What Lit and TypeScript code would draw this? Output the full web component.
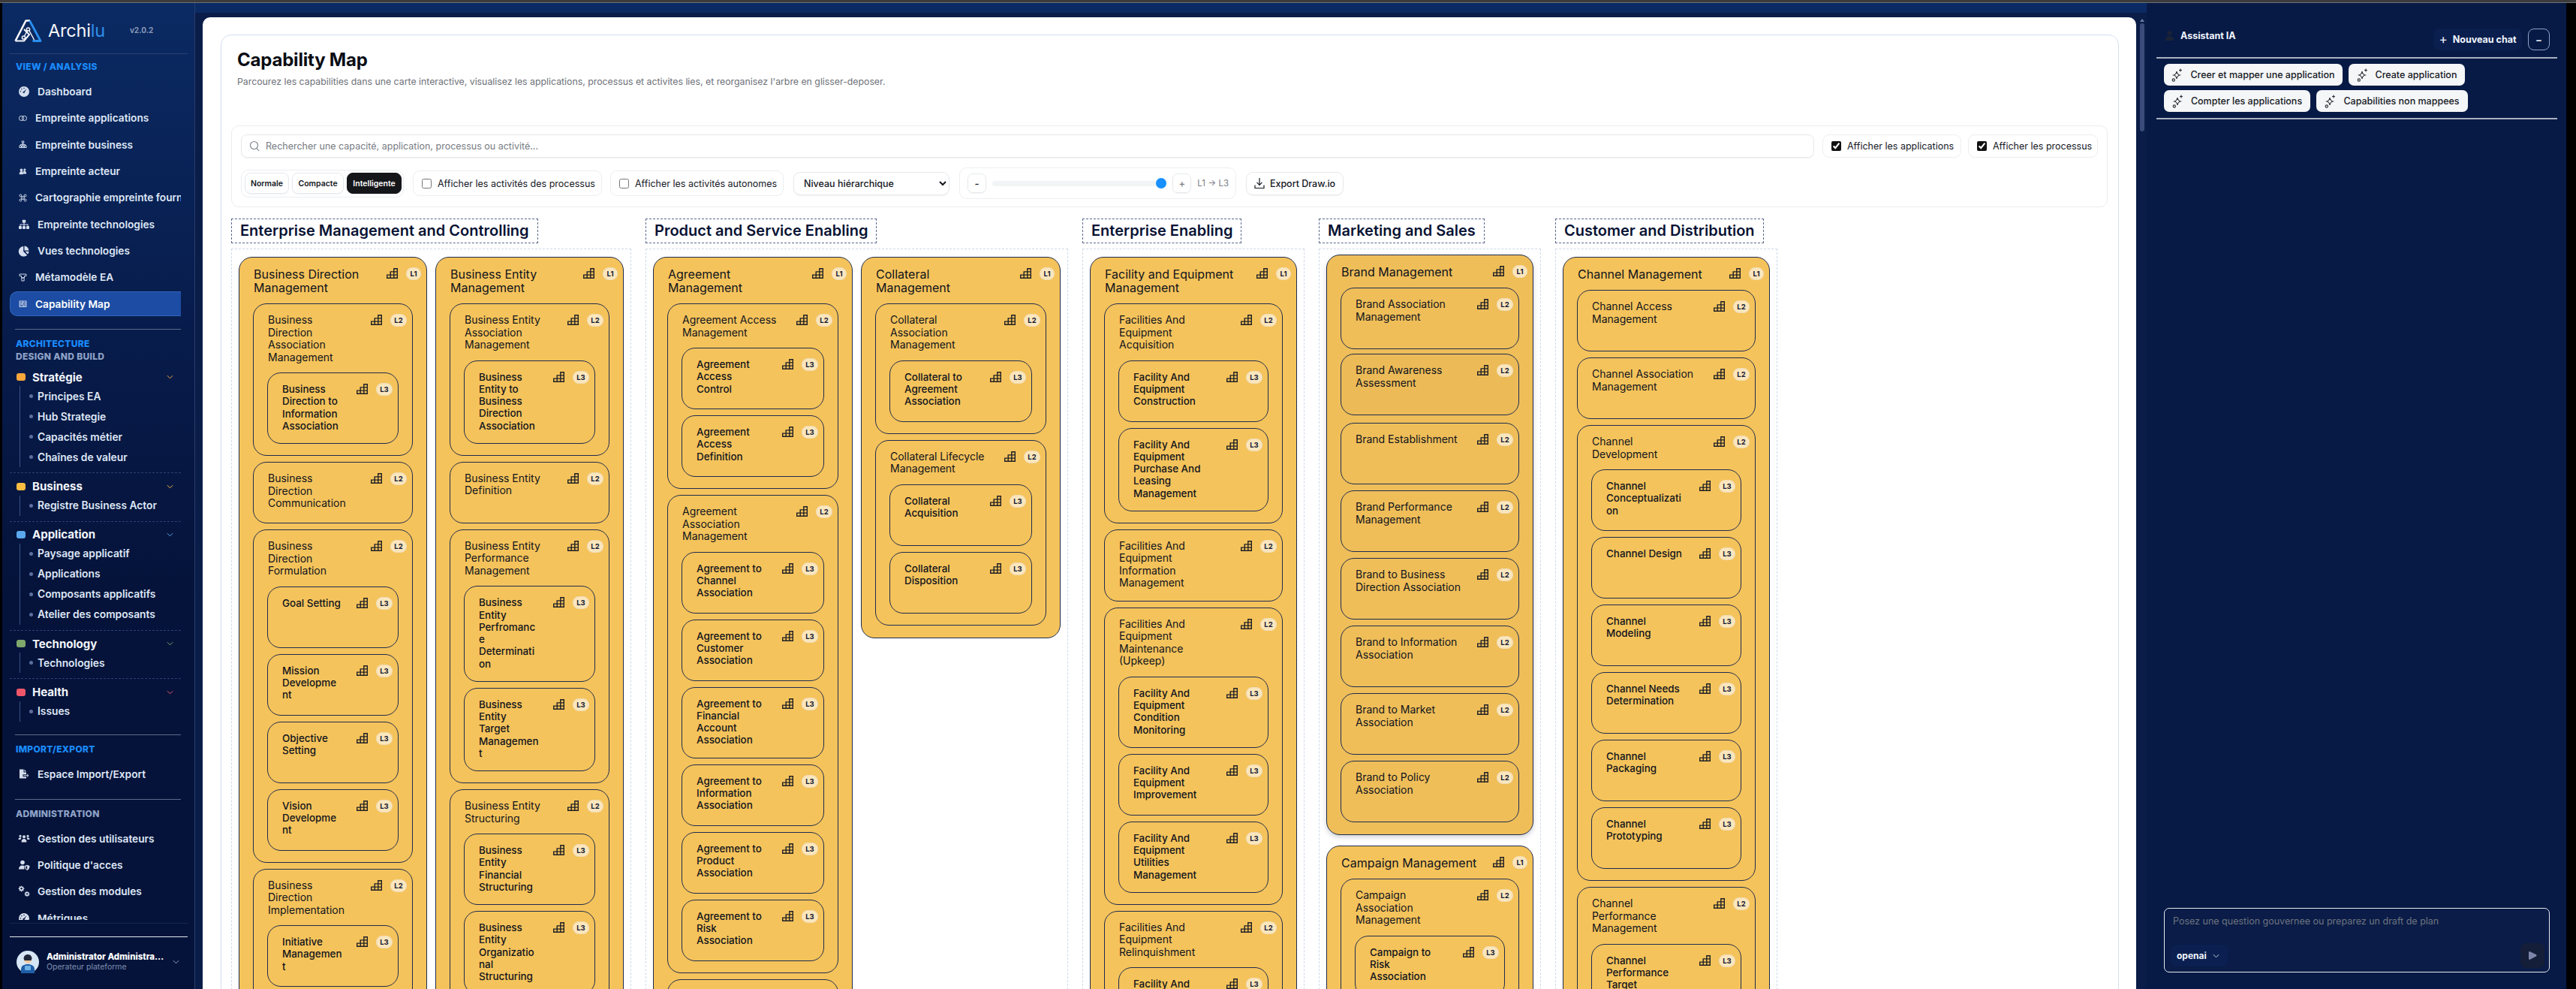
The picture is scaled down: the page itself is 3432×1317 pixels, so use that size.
import { LitElement, html, css, svg } from "lit";
import { customElement } from "lit/decorators.js";

// capability tree, line breaks are kept as the map shows them
type Cap = { t: string; c?: Cap[]; hot?: boolean };
type Domain = { name: string; size: string; cols: Cap[][] };

const leaf = (t: string, hot = false): Cap => ({ t, hot });

const domains: Domain[] = [
  {
    name: "Enterprise Management and Controlling",
    size: "narrow",
    cols: [
      [
        {
          t: "Business Direction\nManagement",
          c: [
            { t: "Business\nDirection\nAssociation\nManagement", c: [leaf("Business\nDirection to\nInformation\nAssociation")] },
            leaf("Business\nDirection\nCommunication"),
            {
              t: "Business\nDirection\nFormulation",
              c: [leaf("Goal Setting"), leaf("Mission\nDevelopme\nnt"), leaf("Objective\nSetting"), leaf("Vision\nDevelopme\nnt")],
            },
            { t: "Business\nDirection\nImplementation", c: [leaf("Initiative\nManagemen\nt"), leaf("Strategy\nDefinition")] },
          ],
        },
      ],
      [
        {
          t: "Business Entity\nManagement",
          c: [
            { t: "Business Entity\nAssociation\nManagement", c: [leaf("Business\nEntity to\nBusiness\nDirection\nAssociation")] },
            leaf("Business Entity\nDefinition"),
            {
              t: "Business Entity\nPerformance\nManagement",
              c: [leaf("Business\nEntity\nPerfromanc\ne\nDeterminati\non"), leaf("Business\nEntity\nTarget\nManagemen\nt")],
            },
            {
              t: "Business Entity\nStructuring",
              c: [leaf("Business\nEntity\nFinancial\nStructuring"), leaf("Business\nEntity\nOrganizatio\nnal\nStructuring")],
            },
          ],
        },
      ],
    ],
  },
  {
    name: "Product and Service Enabling",
    size: "medium",
    cols: [
      [
        {
          t: "Agreement\nManagement",
          c: [
            { t: "Agreement Access\nManagement", c: [leaf("Agreement\nAccess\nControl"), leaf("Agreement\nAccess\nDefinition")] },
            {
              t: "Agreement\nAssociation\nManagement",
              c: [
                leaf("Agreement to\nChannel\nAssociation"),
                leaf("Agreement to\nCustomer\nAssociation"),
                leaf("Agreement to\nFinancial\nAccount\nAssociation"),
                leaf("Agreement to\nInformation\nAssociation"),
                leaf("Agreement to\nProduct\nAssociation"),
                leaf("Agreement to\nRisk\nAssociation"),
              ],
            },
            leaf("Agreement\nDefinition"),
          ],
        },
      ],
      [
        {
          t: "Collateral\nManagement",
          c: [
            { t: "Collateral\nAssociation\nManagement", c: [leaf("Collateral to\nAgreement\nAssociation")] },
            { t: "Collateral Lifecycle\nManagement", c: [leaf("Collateral\nAcquisition"), leaf("Collateral\nDisposition")] },
          ],
        },
      ],
    ],
  },
  {
    name: "Enterprise Enabling",
    size: "wide",
    cols: [
      [
        {
          t: "Facility and Equipment\nManagement",
          c: [
            {
              t: "Facilities And\nEquipment\nAcquisition",
              c: [leaf("Facility And\nEquipment\nConstruction"), leaf("Facility And\nEquipment\nPurchase And\nLeasing\nManagement")],
            },
            leaf("Facilities And\nEquipment\nInformation\nManagement"),
            {
              t: "Facilities And\nEquipment\nMaintenance\n(Upkeep)",
              c: [
                leaf("Facility And\nEquipment\nCondition\nMonitoring"),
                leaf("Facility And\nEquipment\nImprovement"),
                leaf("Facility And\nEquipment\nUtilities\nManagement"),
              ],
            },
            { t: "Facilities And\nEquipment\nRelinquishment", c: [leaf("Facility And\nEquipment\nDisposal")] },
          ],
        },
      ],
    ],
  },
  {
    name: "Marketing and Sales",
    size: "wide",
    cols: [
      [
        {
          t: "Brand Management",
          hot: true,
          c: [
            leaf("Brand Association\nManagement"),
            leaf("Brand Awareness\nAssessment", true),
            leaf("Brand Establishment"),
            leaf("Brand Performance\nManagement"),
            leaf("Brand to Business\nDirection Association"),
            leaf("Brand to Information\nAssociation"),
            leaf("Brand to Market\nAssociation"),
            leaf("Brand to Policy\nAssociation"),
          ],
        },
        {
          t: "Campaign Management",
          c: [{ t: "Campaign\nAssociation\nManagement", c: [leaf("Campaign to\nRisk\nAssociation")] }],
        },
      ],
    ],
  },
  {
    name: "Customer and Distribution",
    size: "wide",
    cols: [
      [
        {
          t: "Channel Management",
          c: [
            leaf("Channel Access\nManagement"),
            leaf("Channel Association\nManagement"),
            {
              t: "Channel\nDevelopment",
              c: [
                leaf("Channel\nConceptualizati\non"),
                leaf("Channel Design"),
                leaf("Channel\nModeling"),
                leaf("Channel Needs\nDetermination"),
                leaf("Channel\nPackaging"),
                leaf("Channel\nPrototyping"),
              ],
            },
            { t: "Channel\nPerformance\nManagement", c: [leaf("Channel\nPerformance\nTarget\nManagement")] },
          ],
        },
      ],
    ],
  },
];

// sidebar icons, the outline ones are drawn smaller in the nav
const ic = (body: unknown, stroke = false) =>
  html`<svg class="nav-ico ${stroke ? "small" : ""}" viewBox="0 0 16 16" fill=${stroke ? "none" : "currentColor"} stroke=${stroke ? "currentColor" : "none"} stroke-width="1.200">${body}</svg>`;

const icons: Record<string, unknown> = {
  gauge: ic(svg`<path fill-rule="evenodd" d="M8 1a7 7 0 1 0 0 14A7 7 0 0 0 8 1Zm3.600 3.100-2.700 4.600a1.200 1.200 0 1 1-1-1l3.700-3.600ZM3.400 8.600a.8.8 0 1 1 0-1.600.8.8 0 0 1 0 1.600Zm1.500-3a.8.8 0 1 1 0-1.600.8.8 0 0 1 0 1.600ZM8 4.300a.8.8 0 1 1 0-1.600.8.8 0 0 1 0 1.600Z"/>`),
  rings: ic(svg`<circle cx="5.600" cy="8" r="3.800"/><circle cx="10.400" cy="8" r="3.800"/>`, true),
  tree: ic(svg`<rect x="6.500" y="2.500" width="3" height="3"/><rect x="2.500" y="10" width="3" height="3"/><rect x="6.500" y="10" width="3" height="3"/><rect x="10.500" y="10" width="3" height="3"/><path d="M8 5.500V10M4 10V8h8v2"/>`, true),
  actor: ic(svg`<circle cx="5.500" cy="5.500" r="1.800" fill="currentColor"/><circle cx="11" cy="5" r="1.400" fill="currentColor"/><path fill="currentColor" d="M2.500 12c.2-2.700 1.400-4 3-4s2.800 1.300 3 4h-6Zm7-.8c0-1.400-.3-2.400-.9-3.200.7-.6 1.500-.9 2.400-.7 1.200.3 2 1.600 2.100 3.900H9.500Z"/>`, true),
  cmd: ic(svg`<path d="M6 6H4a1.800 1.800 0 1 1 2-2v8a1.800 1.800 0 1 1-2-2h8a1.800 1.800 0 1 1-2 2V4a1.800 1.800 0 1 1 2 2H6Z"/>`, true),
  sitemap: ic(svg`<rect x="5.700" y="1.800" width="4.600" height="4" rx="1"/><rect x="1" y="10" width="4" height="4" rx="1"/><rect x="6" y="10" width="4" height="4" rx="1"/><rect x="11" y="10" width="4" height="4" rx="1"/><path d="M7.500 5.500h1V7.500H13.500V10h-1V8.500h-4V10h-1V8.500h-4V10h-1V7.500h5Z"/>`),
  pie: ic(svg`<path d="M7.200 2v6.900l5 4.900A6.800 6.800 0 1 1 7.200 2Z"/><path d="M8.500 1.500a6.500 6.500 0 0 1 6 6h-6Z"/><path d="M9.400 8.800h5.100a6.500 6.500 0 0 1-1.500 3.800Z"/>`),
  meta: ic(svg`<path d="M2.500 2.500h11v3h-3v3h-5v-3h-3ZM6 8.500h4v5H6Z"/>`, true),
  table: ic(svg`<path fill="currentColor" stroke="none" fill-rule="evenodd" d="M2 3h12v10.500H2ZM3.200 4.200v2h4v-2Zm5.200 0v2h4.400v-2ZM3.200 7.300v2h2.800v-2Zm4 0v2h5.600v-2ZM3.200 10.400v2h5.800v-2Zm7 0v2h2.600v-2Z"/>`, true),
  file: ic(svg`<path d="M2 1.500h5.500v4H11v2.800H6.500v3H11v2.200H2Z"/><path d="M8.500 1.500 11 4.500H8.500Z"/><path d="M7.500 9.700h6.300M12 7.800l2 1.900-2 1.900" fill="none" stroke="currentColor" stroke-width="1"/>`),
  users: ic(svg`<circle cx="8" cy="5.200" r="2"/><circle cx="3" cy="4.200" r="1.500"/><circle cx="13" cy="4.200" r="1.500"/><path d="M4.500 12.500c0-2.800 1.400-4.500 3.500-4.500s3.500 1.700 3.500 4.500ZM.5 9c0-1.800 1-2.800 2.500-2.800.6 0 1.200.2 1.600.6A5 5 0 0 0 3.600 9Zm15 0c0-1.800-1-2.800-2.500-2.800-.6 0-1.200.2-1.600.6.500.6.900 1.300 1 2.200Z"/>`),
  shield: ic(svg`<circle cx="6" cy="4.500" r="2.800"/><path d="M1 13.500c0-3 2-5 5-5 1 0 1.700.2 2.400.6v4.400Z"/><path fill-rule="evenodd" d="M12.200 7.800 15.500 9c0 3-1 5-3.300 6-2.300-1-3.300-3-3.300-6Zm0 1.400-2 .7c.1 1.900.7 3.200 2 3.900Z"/>`),
  cogs: ic(svg`<path fill-rule="evenodd" d="M5 .8h1.300l.3 1.300.9.400 1.100-.7.9.9-.7 1.100.4.900 1.300.3v1.300l-1.300.3-.4.900.7 1.100-.9.900-1.100-.7-.9.400-.3 1.300H5l-.3-1.300-.9-.4-1.100.7-.9-.9.7-1.100-.4-.9L.8 6V4.700l1.300-.3.4-.9-.7-1.100.9-.9 1.100.7.9-.4Zm.7 3a1.600 1.600 0 1 0 0 3.200 1.600 1.600 0 0 0 0-3.200Z" transform="scale(.8)"/><path fill-rule="evenodd" d="M5 .8h1.300l.3 1.300.9.400 1.100-.7.9.9-.7 1.100.4.900 1.300.3v1.300l-1.300.3-.4.900.7 1.100-.9.900-1.100-.7-.9.400-.3 1.300H5l-.3-1.300-.9-.4-1.100.7-.9-.9.7-1.100-.4-.9L.8 6V4.700l1.300-.3.4-.9-.7-1.100.9-.9 1.100.7.9-.4Zm.7 3a1.600 1.600 0 1 0 0 3.200 1.600 1.600 0 0 0 0-3.200Z" transform="translate(8 7.500) scale(.72)"/>`),
};

const stairs = html`<svg class="stairs" viewBox="0 0 15 14" fill="none" stroke="currentColor" stroke-width="1.400"><path d="M.7 13.300h13.600V.7H9.800v4.200H5.200v4.200H.7ZM5.200 9.100h9.100M9.800 4.900h4.500M5.200 9.100v4.200M9.800 4.900v8.400"/></svg>`;

const chevron = html`<svg class="chev" viewBox="0 0 10 6" fill="none" stroke="currentColor" stroke-width="1.100"><path d="M1 1l4 4 4-4"/></svg>`;

const sparkle = html`<svg class="spark" viewBox="0 0 15 20" fill="none" stroke="currentColor" stroke-width="1.200"><path d="M7 5c.5 3.200 1.500 4.300 4 5-2.500.7-3.500 1.800-4 5-.5-3.200-1.500-4.300-4-5 2.500-.7 3.500-1.800 4-5Z"/><path d="M12 1.500v4M10 3.500h4"/><circle cx="2.800" cy="16.500" r="1.600"/></svg>`;

@customElement("app-root")
export class AppRoot extends LitElement {
  static styles = css`
    :host {
      display: block;
      height: 100vh;
      overflow: hidden;
      background: #000;
      font-family: Inter, "Liberation Sans", sans-serif;
    }
    .topbar {
      height: 4px;
      background: #3a3b3a;
      border-bottom: 1px solid #6d7078;
      box-sizing: border-box;
    }
    .shell {
      display: flex;
      height: calc(100% - 4px);
      padding: 0 13px 0 3px;
    }

    /* sidebar */
    .side {
      width: 257px;
      flex: none;
      box-sizing: border-box;
      padding: 0 9px 0 10px;
      display: flex;
      flex-direction: column;
      background: linear-gradient(180deg, #0b2a63 0%, #071a48 38%, #05133a 60%, #05133a 100%);
      border-right: 1px solid #2a3c6d;
      color: #dfe7f6;
    }
    .brand {
      flex: none;
      height: 68px;
      box-sizing: border-box;
      border-bottom: 1px solid #2b3f6e;
      display: flex;
      align-items: center;
      padding: 6px 0 0 6px;
    }
    .logo {
      width: 37px;
      height: 33px;
      flex: none;
    }
    .word {
      font-size: 23.500px;
      font-weight: 400;
      color: #f3f5f9;
      margin-left: 8px;
      letter-spacing: -0.2px;
    }
    .word b {
      font-weight: 400;
      color: #2f8fe8;
    }
    .ver {
      font-size: 10px;
      font-weight: 700;
      color: #8797b6;
      margin-left: 33px;
      margin-top: -2px;
    }
    .nav {
      flex: 1;
      min-height: 0;
      width: 228px;
      overflow: hidden;
      padding-top: 9px;
    }
    .sec {
      height: 16px;
      line-height: 16px;
      margin-left: 8px;
      font-size: 12px;
      font-weight: 800;
      letter-spacing: 0.3px;
      color: #1a8dff;
      white-space: nowrap;
    }
    .sec.sub {
      color: #8fa3c8;
      margin-top: 1px;
      margin-bottom: 2px;
    }
    .sec.muted {
      color: #8fa3c8;
    }
    .items {
      margin-top: 8.500px;
      display: flex;
      flex-direction: column;
      gap: 2.350px;
    }
    .item {
      height: 33px;
      box-sizing: border-box;
      display: flex;
      align-items: center;
      gap: 10px;
      padding-left: 11px;
      font-size: 13.700px;
      font-weight: 600;
      white-space: nowrap;
      border-radius: 10px 0 0 10px;
    }
    .item.on {
      background: #1c4ca3;
      border: 1px solid #3266bd;
      border-right: 0;
      padding-left: 10px;
      color: #fff;
    }
    .nav-ico {
      width: 16px;
      height: 16px;
      flex: none;
      color: #d5deee;
    }
    .nav-ico.small {
      width: 13px;
      height: 13px;
    }
    .rule {
      height: 1px;
      background: #5c6a8a;
      margin: 16.500px 0 11px 7px;
    }
    .rule.tight {
      margin-top: 10px;
    }
    .group {
      padding: 4.400px 0 7px;
      border-bottom: 1px dashed #2c3f70;
    }
    .group.end {
      border-bottom: 0;
    }
    .group-head {
      height: 26px;
      display: flex;
      align-items: center;
      padding-left: 9px;
      font-size: 15px;
      font-weight: 700;
      color: #f3f6fb;
    }
    .swatch {
      width: 12px;
      height: 10px;
      border-radius: 3px;
      margin-right: 9px;
      flex: none;
    }
    .chev {
      width: 9px;
      height: 6px;
      margin-left: auto;
      margin-right: 10px;
    }
    .subs {
      margin: -1px 0 0 13px;
      border-left: 1px solid #3d5285;
      padding-left: 12px;
    }
    .subitem {
      height: 27px;
      display: flex;
      align-items: center;
      font-size: 13.800px;
      font-weight: 600;
      white-space: nowrap;
      color: #dfe7f6;
    }
    .subitem i {
      width: 5px;
      height: 5px;
      border-radius: 50%;
      background: #5c6f9e;
      margin-right: 6px;
      flex: none;
    }
    .side-foot {
      flex: none;
      height: 88px;
      box-sizing: border-box;
      border-top: 1px solid #14264f;
      margin-top: 4px;
      padding-top: 17px;
    }
    .user {
      border-top: 1px solid #e7eaf0;
      display: flex;
      align-items: center;
      padding: 18px 9px 0;
      gap: 10px;
    }
    .avatar {
      width: 30px;
      height: 30px;
      flex: none;
    }
    .who {
      flex: 1;
      min-width: 0;
    }
    .who b {
      display: block;
      font-size: 11.500px;
      font-weight: 800;
      color: #fff;
      white-space: nowrap;
      overflow: hidden;
      text-overflow: ellipsis;
      line-height: 14px;
    }
    .who span {
      display: block;
      font-size: 10.500px;
      color: #7f8fb0;
      line-height: 14px;
    }
    .user .chev {
      margin: 0 2px 0 0;
      color: #9aa6bf;
    }

    /* middle */
    .center {
      flex: 1;
      min-width: 0;
      display: flex;
      padding-top: 19px;
      background: linear-gradient(180deg, #0b2a63 0, #0b2a63 13px, #0a1d48 13px);
    }
    .panel {
      flex: 1;
      min-width: 0;
      margin-left: 10px;
      background: #fff;
      border-radius: 10px 10px 0 0;
      padding: 23px 23px 0 24px;
      overflow: hidden;
    }
    .sbar {
      width: 14px;
      flex: none;
      display: flex;
      flex-direction: column;
      align-items: center;
      padding-left: 1px;
      padding-top: 2px;
      box-sizing: border-box;
    }
    .sbar i {
      width: 0;
      height: 0;
      border-left: 3px solid transparent;
      border-right: 3px solid transparent;
      border-bottom: 4px solid #6f80a6;
    }
    .sbar b {
      display: block;
      width: 6px;
      height: 144px;
      border-radius: 3px;
      background: #3a4d7a;
      margin-top: 2px;
    }
    .card {
      border: 1px solid #d3dfee;
      border-radius: 14px;
      padding: 18px 14px 0 13px;
    }
    .hero {
      padding-left: 8px;
      height: 102px;
    }
    h1 {
      margin: 0;
      font-size: 24px;
      line-height: 30px;
      font-weight: 700;
      color: #0a0d14;
      letter-spacing: -0.2px;
    }
    .hero p {
      margin: 6px 0 0;
      font-size: 12.300px;
      line-height: 16px;
      color: #6d7178;
    }
    .toolbar {
      border: 1px solid #ececef;
      border-radius: 10px;
      padding: 11px 12px 10px;
      display: flex;
      flex-direction: column;
      gap: 13px;
    }
    .row {
      display: flex;
      align-items: center;
      gap: 10px;
    }
    .row.tools {
      gap: 12px;
    }
    .search {
      flex: 1;
      height: 31px;
      box-sizing: border-box;
      border: 1px solid #e6e8ec;
      border-radius: 8px;
      box-shadow: 0 1px 1px rgba(0, 0, 0, 0.05);
      display: flex;
      align-items: center;
      gap: 8px;
      padding-left: 10px;
      font-size: 12.500px;
      color: #777b82;
    }
    .search svg {
      width: 14px;
      height: 15px;
      flex: none;
    }
    .check {
      height: 31px;
      box-sizing: border-box;
      border: 1px solid #eceef1;
      border-radius: 9px;
      display: flex;
      align-items: center;
      gap: 8px;
      padding-left: 11px;
      font-size: 12.500px;
      color: #15181f;
      white-space: nowrap;
    }
    .check input {
      width: 13px;
      height: 13px;
      margin: 0;
      accent-color: #111;
    }
    .check.on-app {
      width: 185px;
      margin-left: 1px;
    }
    .check.on-proc {
      width: 173px;
      margin-left: -1px;
    }
    .check.wide {
      height: 34px;
      width: 252px;
    }
    .check.wide2 {
      height: 34px;
      width: 231px;
      margin-left: -1px;
    }
    .seg {
      width: 217px;
      height: 37px;
      box-sizing: border-box;
      border: 1px solid #eceef1;
      border-radius: 10px;
      display: flex;
      align-items: center;
      gap: 4px;
      padding-left: 4px;
    }
    .seg span {
      height: 28px;
      box-sizing: border-box;
      border: 1px solid #e6e8ec;
      border-radius: 8px;
      display: flex;
      align-items: center;
      justify-content: center;
      font-size: 10.500px;
      font-weight: 600;
      color: #15181f;
      box-shadow: 0 1px 1px rgba(0, 0, 0, 0.05);
    }
    .seg .s1 {
      width: 59px;
    }
    .seg .s2 {
      width: 69px;
    }
    .seg .s3 {
      width: 73px;
      background: #15161a;
      color: #fff;
      border-color: #15161a;
    }
    .level {
      width: 208px;
      height: 31px;
      box-sizing: border-box;
      border: 1px solid #e6e8ec;
      border-radius: 9px;
      background: #fff;
      padding-left: 9px;
      font: 500 12.500px Inter, "Liberation Sans", sans-serif;
      color: #15181f;
      margin-left: 1px;
      box-shadow: 0 1px 1px rgba(0, 0, 0, 0.05);
    }
    .zoom {
      width: 369px;
      height: 42px;
      margin-left: 1px;
      box-sizing: border-box;
      border: 1px solid #eceef1;
      border-radius: 10px;
      display: flex;
      align-items: center;
      padding: 0 9px 0 10px;
      gap: 8px;
    }
    .step {
      width: 25px;
      height: 26px;
      flex: none;
      box-sizing: border-box;
      border: 1px solid #e6e8ec;
      border-radius: 7px;
      display: flex;
      align-items: center;
      justify-content: center;
      font-size: 13px;
      font-weight: 500;
      color: #15181f;
      box-shadow: 0 1px 1px rgba(0, 0, 0, 0.05);
    }
    .step.dim {
      color: #7a7e85;
    }
    .zoom input {
      flex: 1;
      min-width: 0;
      margin: 0;
      height: 16px;
      -webkit-appearance: none;
      appearance: none;
      background: transparent;
    }
    .zoom input::-webkit-slider-runnable-track {
      height: 7px;
      border-radius: 4px;
      background: #f2f4f5;
    }
    .zoom input::-webkit-slider-thumb {
      -webkit-appearance: none;
      width: 14px;
      height: 14px;
      margin-top: -3.500px;
      border-radius: 50%;
      background: #1890ff;
    }
    .range-label {
      font-size: 11.500px;
      color: #7a7e85;
      white-space: nowrap;
    }
    .export {
      width: 130px;
      height: 31px;
      margin-left: 1px;
      box-sizing: border-box;
      border: 1px solid #e6e8ec;
      border-radius: 9px;
      display: flex;
      align-items: center;
      justify-content: center;
      gap: 7px;
      font-size: 12.500px;
      font-weight: 500;
      color: #15181f;
      white-space: nowrap;
      box-shadow: 0 1px 1px rgba(0, 0, 0, 0.05);
    }
    .export svg {
      width: 14px;
      height: 16px;
    }

    /* capability map */
    .map {
      display: flex;
      gap: 19px;
      align-items: stretch;
      margin-top: 15px;
    }
    .domain {
      display: flex;
      flex-direction: column;
      flex: none;
    }
    .domain-name {
      align-self: flex-start;
      height: 33px;
      line-height: 31px;
      box-sizing: border-box;
      border: 1px dashed #5a6a8c;
      padding: 0 11px;
      font-size: 20px;
      font-weight: 600;
      color: #071233;
      white-space: nowrap;
    }
    .domain-body {
      flex: 1;
      display: flex;
      gap: 11px;
      margin-top: 7px;
      padding: 10px 9px 10px 9px;
      border: 1px dashed #cfd9e7;
      align-items: flex-start;
    }
    .col {
      display: flex;
      flex-direction: column;
      gap: 11px;
    }
    .domain.narrow .col {
      width: 251px;
    }
    .domain.medium .col {
      width: 266px;
    }
    .domain.wide .col {
      width: 276px;
    }
    .node {
      box-sizing: border-box;
      background: #f5c35b;
      border: 1px solid #1d2b4f;
      border-radius: 18px;
      padding: 13px 18px 15px;
      min-height: 82px;
      color: #10131c;
    }
    .node.l1 {
      padding-bottom: 16px;
    }
    .node.hot {
      background: #efbe59;
      transform: translateY(-2px);
    }
    .node.l1.hot {
      transform: translateY(-3px);
      box-shadow: 0 3px 6px rgba(20, 30, 60, 0.2);
    }
    .node.l1.hot > .kids > .node {
      background: #efbe59;
    }
    .node.l1.hot > .kids > .node.hot {
      background: #ecbb57;
    }
    .head {
      display: flex;
      align-items: flex-start;
      margin-right: -11px;
      padding-left: 1px;
    }
    .name {
      flex: 1;
      min-width: 0;
      white-space: pre-line;
    }
    .l1 > .head > .name {
      font-size: 16px;
      line-height: 18px;
    }
    .l2 > .head > .name {
      font-size: 14px;
      line-height: 16.500px;
    }
    .l3 > .head > .name {
      font-size: 13.400px;
      font-weight: 500;
      line-height: 16.250px;
    }
    .stairs {
      width: 15px;
      height: 14px;
      flex: none;
      margin-top: 1px;
      color: #1f2026;
    }
    .badge {
      flex: none;
      width: 22px;
      height: 17px;
      margin-left: 11px;
      border-radius: 8px;
      background: #fbe6bd;
      border: 1px solid #f0dcb5;
      box-sizing: border-box;
      font-size: 9.500px;
      font-weight: 700;
      line-height: 15px;
      text-align: center;
      color: #141a33;
    }
    .l1 > .head > .badge {
      width: 20px;
    }
    .kids {
      margin-top: 12px;
      display: flex;
      flex-direction: column;
      gap: 8px;
    }

    /* assistant */
    .assistant {
      width: 559px;
      flex: none;
      box-sizing: border-box;
      background: #071a45;
      padding: 0 12px 0 13px;
      display: flex;
      flex-direction: column;
    }
    .ass-head {
      flex: none;
      height: 74px;
      box-sizing: border-box;
      border-bottom: 2px solid #a9b0c0;
      display: flex;
      align-items: flex-start;
      padding-left: 11px;
    }
    .ass-title {
      margin-top: 36px;
      display: flex;
      align-items: center;
      gap: 8px;
      font-size: 12.500px;
      font-weight: 700;
      color: #f2f6ff;
    }
    .ass-title svg {
      width: 13px;
      height: 15px;
      color: #1a2336;
    }
    .new-chat {
      margin: 34px 0 0 auto;
      width: 118px;
      height: 29px;
      box-sizing: border-box;
      border-radius: 8px;
      background: #0b1f4e;
      display: flex;
      align-items: center;
      justify-content: center;
      gap: 7px;
      font-size: 12.500px;
      font-weight: 700;
      color: #f2f6ff;
      white-space: nowrap;
    }
    .new-chat span {
      font-size: 17px;
      font-weight: 400;
      line-height: 1;
    }
    .collapse {
      margin: 34px 10px 0 8px;
      width: 29px;
      height: 29px;
      box-sizing: border-box;
      border: 1px solid #8fa1c6;
      border-radius: 8px;
      display: flex;
      align-items: center;
      justify-content: center;
      color: #e6ecf8;
      font-size: 13px;
      font-weight: 700;
    }
    .chips {
      flex: none;
      height: 81px;
      box-sizing: border-box;
      border-bottom: 2px solid #a9b0c0;
      padding: 7px 0 0 10px;
      display: flex;
      flex-wrap: wrap;
      align-content: flex-start;
      gap: 6px 8px;
      width: 100%;
    }
    .chip {
      height: 29px;
      box-sizing: border-box;
      border-radius: 7px;
      background: #f4f6f7;
      display: flex;
      align-items: center;
      justify-content: center;
      gap: 10px;
      font-size: 12.500px;
      font-weight: 500;
      color: #15181f;
      white-space: nowrap;
    }
    .chip.c1 {
      width: 238px;
    }
    .chip.c2 {
      width: 155px;
    }
    .chip.c3 {
      width: 195px;
    }
    .chip.c4 {
      width: 202px;
    }
    .spark {
      width: 15px;
      height: 20px;
      color: #2d3037;
      flex: none;
    }
    .ass-fill {
      flex: 1;
    }
    .composer {
      flex: none;
      height: 86px;
      margin: 0 10px 22px;
      box-sizing: border-box;
      border: 1px solid #e5e8ef;
      border-radius: 7px;
      padding: 9px 6px 5px 11px;
      display: flex;
      flex-direction: column;
      justify-content: space-between;
      background: #0a1c47;
    }
    .composer p {
      margin: 0;
      font-size: 12.500px;
      line-height: 16px;
      color: #6e7480;
    }
    .composer-row {
      display: flex;
      align-items: flex-end;
      justify-content: space-between;
    }
    .model {
      width: 77px;
      height: 29px;
      margin-left: -3px;
      margin-bottom: 2px;
      box-sizing: border-box;
      border-radius: 8px;
      background: #0b2051;
      display: flex;
      align-items: center;
      gap: 8px;
      padding-left: 8px;
      font-size: 12px;
      font-weight: 700;
      color: #f2f6ff;
    }
    .model .chev {
      margin: 0;
      color: #c8d1e2;
    }
    .send {
      width: 32px;
      height: 33px;
      border-radius: 8px;
      background: #141e38;
      display: flex;
      align-items: center;
      justify-content: center;
    }
    .send svg {
      width: 12px;
      height: 13px;
    }
  `;

  renderNode(n: Cap, level: number): unknown {
    return html`<div class="node l${level} ${n.hot ? "hot" : ""}">
      <div class="head">
        <div class="name">${n.t}</div>
        ${stairs}
        <span class="badge">L${level}</span>
      </div>
      ${n.c ? html`<div class="kids">${n.c.map((k) => this.renderNode(k, level + 1))}</div>` : ""}
    </div>`;
  }

  renderGroup(name: string, color: string, subs: string[], end = false) {
    return html`<div class="group ${end ? "end" : ""}">
      <div class="group-head">
        <span class="swatch" style="background:${color}"></span>${name}<span style="color:${color};margin-left:auto;display:flex">${chevron}</span>
      </div>
      <div class="subs">${subs.map((s) => html`<div class="subitem"><i></i>${s}</div>`)}</div>
    </div>`;
  }

  renderSidebar() {
    const view: [string, string][] = [
      ["gauge", "Dashboard"],
      ["rings", "Empreinte applications"],
      ["tree", "Empreinte business"],
      ["actor", "Empreinte acteur"],
      ["cmd", "Cartographie empreinte fournisseurs"],
      ["sitemap", "Empreinte technologies"],
      ["pie", "Vues technologies"],
      ["meta", "Métamodèle EA"],
      ["table", "Capability Map"],
    ];
    return html`<aside class="side">
      <div class="brand">
        <svg class="logo" viewBox="0 0 37 33" fill="none">
          <path d="M1.500 30.500 15.500 3.500H21" stroke="#f4f6fa" stroke-width="2.600" stroke-linejoin="round"/>
          <path d="M1.500 30.500H13l7-8.500-7-7" stroke="#f4f6fa" stroke-width="2"/>
          <path d="M20.500 3.500 35 30.500H24.500" stroke="#2a8ff0" stroke-width="2.800" stroke-linejoin="round"/>
          <circle cx="18.500" cy="15" r="2.100" stroke="#f4f6fa" stroke-width="1.500"/>
          <circle cx="12.500" cy="26" r="2.100" stroke="#f4f6fa" stroke-width="1.500"/>
          <path d="M17.500 17 13.500 24" stroke="#f4f6fa" stroke-width="1.500"/>
          <path d="M20 17l6.500 12" stroke="#f4f6fa" stroke-width="1.500"/>
        </svg>
        <span class="word">Archi<b>lu</b></span>
        <span class="ver">v2.0.2</span>
      </div>
      <div class="nav">
        <div class="sec">VIEW / ANALYSIS</div>
        <div class="items">
          ${view.map(
            ([i, t], idx) => html`<div class="item ${idx === view.length - 1 ? "on" : ""}">${icons[i]}${t}</div>`,
          )}
        </div>
        <div class="rule"></div>
        <div class="sec">ARCHITECTURE</div>
        <div class="sec sub">DESIGN AND BUILD</div>
        ${this.renderGroup("Stratégie", "#f7a63c", ["Principes EA", "Hub Strategie", "Capacités métier", "Chaînes de valeur"])}
        ${this.renderGroup("Business", "#f9bd41", ["Registre Business Actor"])}
        ${this.renderGroup("Application", "#5aa9ee", ["Paysage applicatif", "Applications", "Composants applicatifs", "Atelier des composants"])}
        ${this.renderGroup("Technology", "#7ea86c", ["Technologies"])}
        ${this.renderGroup("Health", "#f0566a", ["Issues"], true)}
        <div class="rule tight"></div>
        <div class="sec">IMPORT/EXPORT</div>
        <div class="items"><div class="item">${icons.file}Espace Import/Export</div></div>
        <div class="rule"></div>
        <div class="sec muted">ADMINISTRATION</div>
        <div class="items">
          <div class="item">${icons.users}Gestion des utilisateurs</div>
          <div class="item">${icons.shield}Politique d'acces</div>
          <div class="item">${icons.cogs}Gestion des modules</div>
          <div class="item">${icons.gauge}Métriques</div>
        </div>
      </div>
      <div class="side-foot">
        <div class="user">
          <svg class="avatar" viewBox="0 0 30 30">
            <circle cx="15" cy="15" r="15" fill="#d7e6f4"/>
            <path d="M6 30v-5c0-5 4-7 9-7s9 2 9 7v5Z" fill="#1f5fa8"/>
            <rect x="11" y="20" width="8" height="6" rx="1" fill="#6fb2e6"/>
            <circle cx="15" cy="12" r="5" fill="#f0c8a0"/>
            <path d="M9.500 11c0-4 2.500-6 5.500-6s5.500 2 5.500 6Z" fill="#20283a"/>
            <rect x="10" y="10.500" width="10" height="2.500" rx="1" fill="#20283a"/>
          </svg>
          <div class="who">
            <b>Administrator Administrator</b>
            <span>Operateur plateforme</span>
          </div>
          ${chevron}
        </div>
      </div>
    </aside>`;
  }

  renderToolbar() {
    return html`<div class="toolbar">
      <div class="row">
        <div class="search">
          <svg viewBox="0 0 14 15" fill="none" stroke="#767a82" stroke-width="1.100"><circle cx="6.500" cy="6.500" r="5"/><path d="M10 10.500l3 3.500"/></svg>
          Rechercher une capacité, application, processus ou activité...
        </div>
        <label class="check on-app"><input type="checkbox" checked />Afficher les applications</label>
        <label class="check on-proc"><input type="checkbox" checked />Afficher les processus</label>
      </div>
      <div class="row tools">
        <div class="seg">
          <span class="s1">Normale</span>
          <span class="s2">Compacte</span>
          <span class="s3">Intelligente</span>
        </div>
        <label class="check wide"><input type="checkbox" />Afficher les activités des processus</label>
        <label class="check wide2"><input type="checkbox" />Afficher les activités autonomes</label>
        <select class="level"><option>Niveau hiérarchique</option></select>
        <div class="zoom">
          <span class="step">-</span>
          <input type="range" min="1" max="3" value="3" />
          <span class="step dim">+</span>
          <span class="range-label">L1 → L3</span>
        </div>
        <div class="export">
          <svg viewBox="0 0 14 16" fill="none" stroke="#15181f" stroke-width="1.200"><path d="M7 1v9M3.500 6.800 7 10.300l3.500-3.500M1 10.500V14.500h12v-4"/></svg>
          Export Draw.io
        </div>
      </div>
    </div>`;
  }

  renderAssistant() {
    return html`<aside class="assistant">
      <div class="ass-head">
        <div class="ass-title">
          <svg viewBox="0 0 13 15" fill="currentColor"><circle cx="6.500" cy="4" r="3"/><path d="M1 14c0-4 2-6 5.500-6S12 10 12 14Z"/></svg>
          Assistant IA
        </div>
        <div class="new-chat"><span>+</span>Nouveau chat</div>
        <div class="collapse">−</div>
      </div>
      <div class="chips">
        <div class="chip c1">${sparkle}Creer et mapper une application</div>
        <div class="chip c2">${sparkle}Create application</div>
        <div class="chip c3">${sparkle}Compter les applications</div>
        <div class="chip c4">${sparkle}Capabilities non mappees</div>
      </div>
      <div class="ass-fill"></div>
      <div class="composer">
        <p>Posez une question gouvernee ou preparez un draft de plan</p>
        <div class="composer-row">
          <div class="model">openai ${chevron}</div>
          <div class="send"><svg viewBox="0 0 12 13" fill="#7d86a8"><path d="M1 2.200c0-1 1-1.500 1.800-1l8 3.800c.9.500.9 2 0 2.500l-8 4.300c-.8.500-1.800 0-1.800-1Z"/></svg></div>
        </div>
      </div>
    </aside>`;
  }

  render() {
    return html`<div class="topbar"></div>
      <div class="shell">
        ${this.renderSidebar()}
        <main class="center">
          <div class="panel">
            <div class="card">
              <div class="hero">
                <h1>Capability Map</h1>
                <p>Parcourez les capabilities dans une carte interactive, visualisez les applications, processus et activites lies, et reorganisez l'arbre en glisser-deposer.</p>
              </div>
              ${this.renderToolbar()}
              <div class="map">
                ${domains.map(
                  (d) => html`<section class="domain ${d.size}">
                    <div class="domain-name">${d.name}</div>
                    <div class="domain-body">
                      ${d.cols.map((c) => html`<div class="col">${c.map((n) => this.renderNode(n, 1))}</div>`)}
                    </div>
                  </section>`,
                )}
              </div>
            </div>
          </div>
          <div class="sbar"><i></i><b></b></div>
        </main>
        ${this.renderAssistant()}
      </div>`;
  }
}
